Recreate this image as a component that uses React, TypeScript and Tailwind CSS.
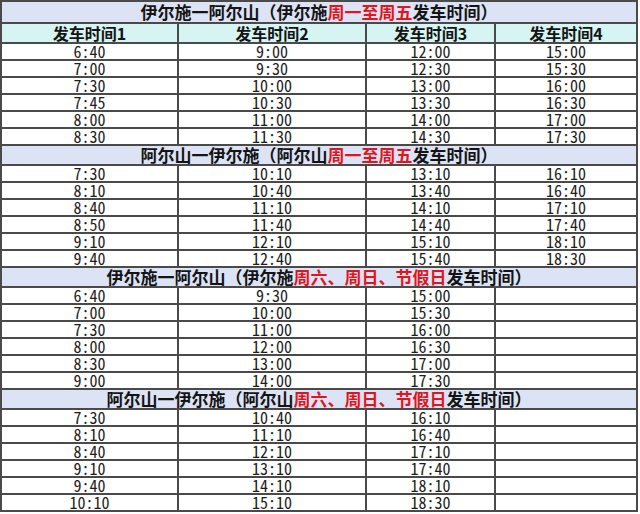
const sections = [
  {
    from: "伊尔施一阿尔山（伊尔施",
    days: "周一至周五",
    h: "h-[22px]",
    rows: [
      ["6:40", "9:00", "12:00", "15:00"],
      ["7:00", "9:30", "12:30", "15:30"],
      ["7:30", "10:00", "13:00", "16:00"],
      ["7:45", "10:30", "13:30", "16:30"],
      ["8:00", "11:00", "14:00", "17:00"],
      ["8:30", "11:30", "14:30", "17:30"],
    ],
  },
  {
    from: "阿尔山一伊尔施（阿尔山",
    days: "周一至周五",
    h: "h-[20px]",
    rows: [
      ["7:30", "10:10", "13:10", "16:10"],
      ["8:10", "10:40", "13:40", "16:40"],
      ["8:40", "11:10", "14:10", "17:10"],
      ["8:50", "11:40", "14:40", "17:40"],
      ["9:10", "12:10", "15:10", "18:10"],
      ["9:40", "12:40", "15:40", "18:30"],
    ],
  },
  {
    from: "伊尔施一阿尔山（伊尔施",
    days: "周六、周日、节假日",
    h: "h-[20px]",
    rows: [
      ["6:40", "9:30", "15:00", ""],
      ["7:00", "10:00", "15:30", ""],
      ["7:30", "11:00", "16:00", ""],
      ["8:00", "12:00", "16:30", ""],
      ["8:30", "13:00", "17:00", ""],
      ["9:00", "14:00", "17:30", ""],
    ],
  },
  {
    from: "阿尔山一伊尔施（阿尔山",
    days: "周六、周日、节假日",
    h: "h-[20px]",
    rows: [
      ["7:30", "10:40", "16:10", ""],
      ["8:10", "11:10", "16:40", ""],
      ["8:40", "12:10", "17:10", ""],
      ["9:10", "13:10", "17:40", ""],
      ["9:40", "14:10", "18:10", ""],
      ["10:10", "15:10", "18:30", ""],
    ],
  },
];

const cell = "border-2 border-[#4a4a4a] p-0 text-center align-middle";

export default function App() {
  return (
    <div className="w-[640px] h-[514px] overflow-hidden bg-white font-['Noto_Sans_CJK_SC',sans-serif] text-[#1c1c1c]">
      <table className="table-fixed border-collapse w-[638px]">
        <colgroup>
          <col className="w-[177px]" />
          <col className="w-[188px]" />
          <col className="w-[129px]" />
          <col className="w-[142px]" />
        </colgroup>
        <tbody>
          {sections.map((s, si) => (
            <>
              <tr key={`t${si}`} className={s.h}>
                <td
                  colSpan={4}
                  className={`${cell} bg-[#dce3f4] text-[17px] leading-[16px] font-bold text-[#141414]`}
                >
                  {s.from}
                  <span className="text-[#e3141c]">{s.days}</span>
                  发车时间）
                </td>
              </tr>
              {si === 0 && (
                <tr className="h-[20px]">
                  {[1, 2, 3, 4].map((n) => (
                    <td
                      key={n}
                      className={`${cell} bg-[#d6f4f1] text-[16px] leading-[15px] font-bold text-[#141414]`}
                    >
                      发车时间{n}
                    </td>
                  ))}
                </tr>
              )}
              {s.rows.map((r, ri) => (
                <tr key={`r${si}-${ri}`} className="h-[17px]">
                  {r.map((v, ci) => (
                    <td
                      key={ci}
                      className={`${cell} text-[16px] leading-[13px] [font-feature-settings:'hwid']`}
                    >
                      {v}
                    </td>
                  ))}
                </tr>
              ))}
            </>
          ))}
        </tbody>
      </table>
    </div>
  );
}
